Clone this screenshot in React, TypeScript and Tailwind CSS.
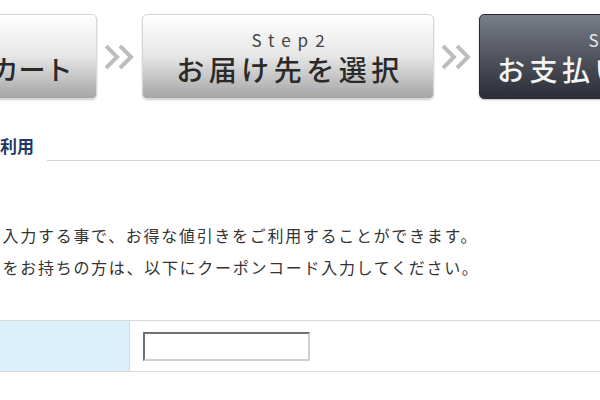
import React from "react";

const Chevrons = () => (
  <div className="flex w-[45px] shrink-0 items-center justify-center">
    <svg width="34" height="28" viewBox="0 0 34 28" fill="none">
      <path d="M3 3 L14 14 L3 25" stroke="#bdbdbd" strokeWidth="4" />
      <path d="M17 3 L28 14 L17 25" stroke="#bdbdbd" strokeWidth="4" />
    </svg>
  </div>
);

type StepProps = { step: string; label: string; active?: boolean; tight?: boolean };

const StepBox = ({ step, label, active, tight }: StepProps) => (
  <div
    className={
      active
        ? "flex h-[85px] w-[292px] shrink-0 flex-col items-center rounded-[5px] border border-[#2a2c33] bg-gradient-to-b from-[#7a7e88] to-[#2b2e37] text-[#f4f4f4] shadow-[0_1px_2px_rgba(0,0,0,0.25)]"
        : "flex h-[85px] w-[292px] shrink-0 flex-col items-center rounded-[5px] border border-[#d6d6d6] bg-gradient-to-b from-[#ffffff] via-[#e6e6e6] to-[#a5a5a5] text-[#2a2a2a] shadow-[0_1px_2px_rgba(0,0,0,0.2)]"
    }
  >
    <div
      className={
        active
          ? "mt-[15px] pl-[7px] text-[17px] leading-[20px] tracking-[7px] text-[#e8e8e8]"
          : "mt-[15px] pl-[7px] text-[17px] leading-[20px] tracking-[7px] text-[#444]"
      }
    >
      {step}
    </div>
    <div
      className={
        tight
          ? "mt-[2px] text-[27px] font-medium leading-[34px]"
          : "mt-[2px] pl-[4px] text-[28px] font-medium leading-[34px] tracking-[4.5px]"
      }
    >
      {label}
    </div>
  </div>
);

export default function App() {
  return (
    <div
      className="h-[400px] w-[600px] overflow-hidden bg-white"
      style={{ fontFamily: '"Noto Sans CJK JP", "Noto Sans", sans-serif' }}
    >
      <div className="ml-[-195px] mt-[14px] flex">
        <StepBox step="Step1" label="ショッピングカート" tight />
        <Chevrons />
        <StepBox step="Step2" label="お届け先を選択" />
        <Chevrons />
        <StepBox step="Step3" label="お支払い方法選択" active />
      </div>

      <div className="mt-[36px] flex items-end">
        <div className="ml-[-102px] shrink-0 pb-[1px] text-[17px] font-bold leading-[22px] text-[#1f3864]">
          クーポンのご利用
        </div>
        <div className="ml-[13px] mb-[-3px] h-px flex-1 bg-[#d4d4d4]" />
      </div>

      <div className="ml-[-139px] mt-[61px] whitespace-nowrap text-[16px] leading-[32px] tracking-[1.7px] text-[#333]">
        <div>クーポンコードを入力する事で、お得な値引きをご利用することができます。</div>
        <div>※クーポンコードをお持ちの方は、以下にクーポンコード入力してください。</div>
      </div>

      <div className="mt-[37px] flex h-[52px] border-y border-[#d8d8d8]">
        <div className="w-[130px] shrink-0 border-r border-[#d8d8d8] bg-[#dcf0fc]" />
        <div className="flex flex-1 items-center pl-[13px]">
          <input
            type="text"
            className="h-[29px] w-[167px] border-2 border-b-[#d0d0d0] border-l-[#707070] border-r-[#d0d0d0] border-t-[#707070] bg-white outline-none"
          />
        </div>
      </div>
    </div>
  );
}
